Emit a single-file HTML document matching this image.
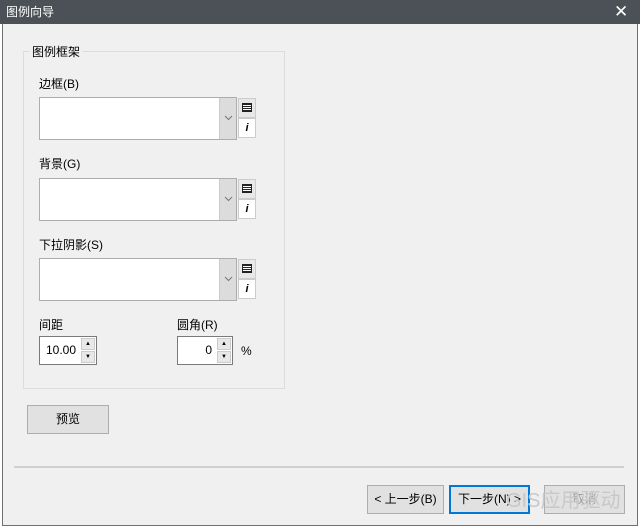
<!DOCTYPE html>
<html><head><meta charset="utf-8"><style>
*{box-sizing:border-box;margin:0;padding:0}
body{width:640px;height:528px;background:#fff;font-family:"Liberation Sans","Noto Sans CJK SC",sans-serif;font-size:12px;color:#000;position:relative;overflow:hidden}
.a{position:absolute}
.dlg{left:2px;top:0;width:636px;height:526px;background:#f0f0f0;border:1px solid #707070}
.tb{left:0;top:0;width:640px;height:24px;background:#4b5157;color:#fff;font-size:12px;line-height:24px;padding-left:6px}
.grp{left:23px;top:51px;width:262px;height:338px;border:1px solid #dcdcdc}
.combo{width:198px;height:43px;border:1px solid #adadad;background:#fff}
.dd{position:absolute;right:0;top:0;width:17px;height:41px;background:#dcdcdc;border-left:1px solid #ccc}
.dd svg{position:absolute;left:4px;top:17px}
.sb{width:18px;height:20px;border:1px solid #ccc;background:#e8e8e8}
.btn{border:1px solid #adadad;background:#e1e1e1;text-align:center;line-height:27px;height:29px}
.spin{height:29px;border:1px solid #7a7a7a;background:#fff;text-align:right;line-height:26px;padding-right:20px;font-size:12px}
.sp{position:absolute;right:1px;width:14px;height:12px;background:#e8e8e8;border:1px solid #ccc;font-size:6px;line-height:10px;text-align:center}
.ic{margin:4px auto;width:10px;height:9px;border:1px solid #222;background:repeating-linear-gradient(#222 0 1px,#fff 1px 2px)}
.ii{display:block;text-align:center;font-weight:bold;font-style:italic;font-size:11px;line-height:18px}
</style></head><body>
<div class="a dlg"></div>
<div class="a tb">图例向导</div>
<div class="a" style="left:614px;top:2px;color:#fff;font-size:17px">✕</div>
<div class="a grp"></div>
<div class="a" style="left:30px;top:43px;background:#f0f0f0;padding:0 2px">图例框架</div>

<div class="a" style="left:39px;top:75px">边框(B)</div>
<div class="a combo" style="left:39px;top:97px"><div class="dd"><svg width="9" height="6"><path d="M1 1l3.5 3.5L8 1" stroke="#777" fill="none"/></svg></div></div>
<div class="a sb" style="left:238px;top:98px"><div class="ic"></div></div>
<div class="a sb" style="left:238px;top:118px;background:#fff"><span class="ii">i</span></div>

<div class="a" style="left:39px;top:155px">背景(G)</div>
<div class="a combo" style="left:39px;top:178px"><div class="dd"><svg width="9" height="6"><path d="M1 1l3.5 3.5L8 1" stroke="#777" fill="none"/></svg></div></div>
<div class="a sb" style="left:238px;top:179px"><div class="ic"></div></div>
<div class="a sb" style="left:238px;top:199px;background:#fff"><span class="ii">i</span></div>

<div class="a" style="left:39px;top:236px">下拉阴影(S)</div>
<div class="a combo" style="left:39px;top:258px"><div class="dd"><svg width="9" height="6"><path d="M1 1l3.5 3.5L8 1" stroke="#777" fill="none"/></svg></div></div>
<div class="a sb" style="left:238px;top:259px"><div class="ic"></div></div>
<div class="a sb" style="left:238px;top:279px;background:#fff"><span class="ii">i</span></div>

<div class="a" style="left:39px;top:316px">间距</div>
<div class="a spin" style="left:39px;top:336px;width:58px">10.00<div class="sp" style="top:1px">▲</div><div class="sp" style="top:14px">▼</div></div>
<div class="a" style="left:177px;top:316px">圆角(R)</div>
<div class="a spin" style="left:177px;top:336px;width:56px">0<div class="sp" style="top:1px">▲</div><div class="sp" style="top:14px">▼</div></div>
<div class="a" style="left:241px;top:344px">%</div>

<div class="a btn" style="left:27px;top:405px;width:82px">预览</div>
<div class="a" style="left:14px;top:466px;width:610px;height:2px;background:#d0d0d0"></div>
<div class="a btn" style="left:367px;top:485px;width:77px">&lt; 上一步(B)</div>
<div class="a btn" style="left:449px;top:485px;width:81px;border:2px solid #0078d7;line-height:25px">下一步(N) &gt;</div>
<div class="a btn" style="left:544px;top:485px;width:81px;color:#999">取消</div>
<div class="a" style="left:506px;top:484px;font-size:20px;color:#c8c8c8">GIS应用驱动</div>
</body></html>
